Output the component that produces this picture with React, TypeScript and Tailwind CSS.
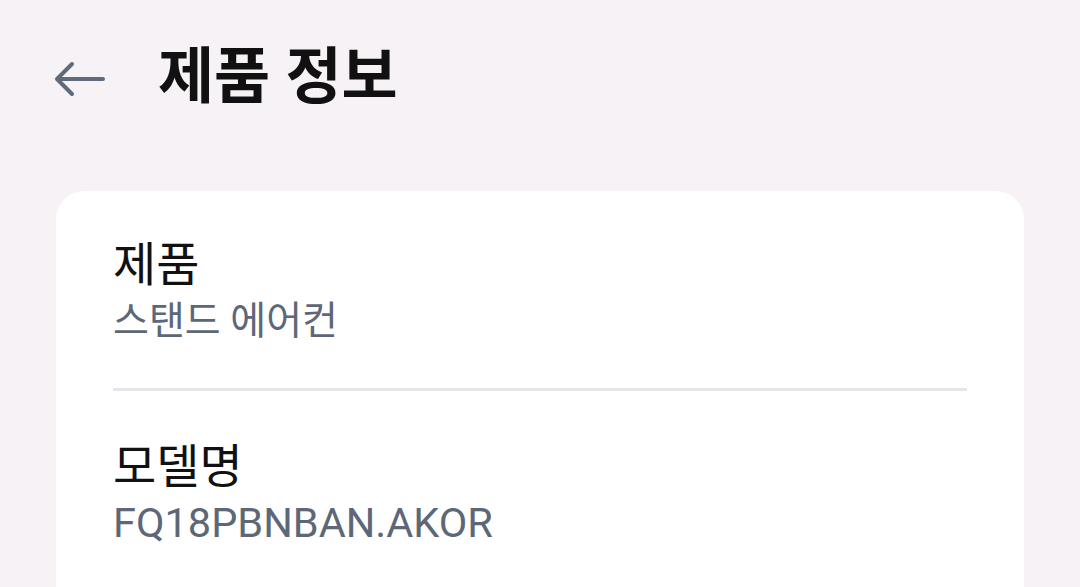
import React from "react";

function BackArrow() {
  return (
    <svg width="52" height="36" viewBox="0 0 52 36" fill="none" stroke="#5f6b7b" strokeWidth="4" strokeLinecap="round" strokeLinejoin="round">
      <path d="M49 18H4" />
      <path d="M18 3L3 18l15 15" />
    </svg>
  );
}

function InfoRow({ label, value, valueSize }: { label: string; value: string; valueSize: string }) {
  return (
    <div className="flex flex-col">
      <span className="text-[47px] leading-[60px] text-[#111111]">{label}</span>
      <span className={`${valueSize} leading-[52px] text-[#5d6778]`}>{value}</span>
    </div>
  );
}

export default function App() {
  return (
    <div
      className="w-[1080px] h-[587px] overflow-hidden bg-[#f6f2f6]"
      style={{ fontFamily: 'Roboto, "Noto Sans CJK KR", sans-serif' }}
    >
      {/* Header */}
      <div className="flex items-center h-[160px] pl-[54px] pb-[2px]">
        <BackArrow />
        <h1 className="ml-[52px] text-[61px] font-bold text-[#111111] leading-none -mt-[4px]">제품 정보</h1>
      </div>

      {/* Card */}
      <div className="mx-[56px] mt-[31px] bg-white rounded-[28px] px-[57px] pt-[44px] pb-[200px]">
        <InfoRow label="제품" value="스탠드 에어컨" valueSize="text-[39px]" />
        <div className="h-[3px] bg-[#e3e7ec] mt-[41px] mb-[46px]" />
        <InfoRow label="모델명" value="FQ18PBNBAN.AKOR" valueSize="text-[41.5px]" />
      </div>
    </div>
  );
}
